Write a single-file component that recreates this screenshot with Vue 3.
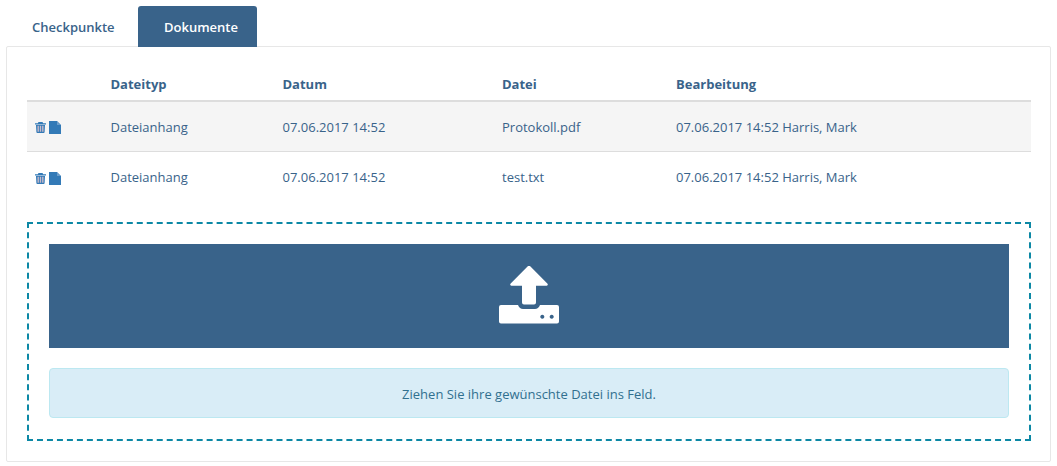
<template>
  <div class="page">
    <ul class="tabs">
      <li v-for="t in tabs" :key="t.name" class="tab" :class="{ active: t.active }">{{ t.name }}</li>
    </ul>
    <div class="panel">
      <table class="docs">
        <colgroup>
          <col class="c-icons" />
          <col class="c-type" />
          <col class="c-date" />
          <col class="c-file" />
          <col />
        </colgroup>
        <thead>
          <tr>
            <th></th>
            <th class="nudge">Dateityp</th>
            <th class="nudge">Datum</th>
            <th>Datei</th>
            <th>Bearbeitung</th>
          </tr>
        </thead>
        <tbody>
          <tr v-for="d in docs" :key="d.file">
            <td class="icons">
              <svg class="ico trash" width="11" height="11" viewBox="0 0 11 11">
                <path fill="#337ab7" d="M3.500 0h4l.7 1.200H11v1.300H0V1.200h2.800z" />
                <path fill="#337ab7" d="M1 3h9l-.4 7a1 1 0 0 1-1 1H2.400a1 1 0 0 1-1-1z" />
                <path fill="#c7b9c9" d="M2.500 3.800h1.400v6H2.500zM4.800 3.800h1.400v6H4.800zM7.100 3.800h1.400v6H7.100z" />
              </svg>
              <svg class="ico" width="12" height="13" viewBox="0 0 12 13">
                <path fill="#337ab7" d="M0 0h8l4 4v9H0z" />
                <path fill="#6f9fcb" d="M8 .5v3.500h3.500z" />
              </svg>
            </td>
            <td class="nudge">{{ d.type }}</td>
            <td class="nudge">{{ d.date }}</td>
            <td>{{ d.file }}</td>
            <td>{{ d.edited }}</td>
          </tr>
        </tbody>
      </table>
      <div class="drop">
        <div class="drop-bar">
          <svg width="60" height="60" viewBox="0 0 60 60">
            <path fill="#fff" d="M28.300.7a2.400 2.400 0 0 1 3.400 0L48.300 17.500a1.300 1.300 0 0 1-1 2.300H37V36.500a2 2 0 0 1-2 2H25a2 2 0 0 1-2-2V19.800H12.700a1.300 1.300 0 0 1-1-2.300z" />
            <path fill="#fff" fill-rule="evenodd" d="M2 39H19c1 2.800 2.800 4 5 4h12c2.200 0 4-1.200 5-4H58a2 2 0 0 1 2 2V55.500a2 2 0 0 1-2 2H2a2 2 0 0 1-2-2V41a2 2 0 0 1 2-2zM43.300 48.700a2 2 0 1 0 .01 0zM52.700 48.700a2 2 0 1 0 .01 0z" />
          </svg>
        </div>
        <div class="hint">Ziehen Sie ihre gewünschte Datei ins Feld.</div>
      </div>
    </div>
  </div>
</template>

<script setup>
const tabs = [
  { name: 'Checkpunkte', active: false },
  { name: 'Dokumente', active: true },
]

const docs = [
  { type: 'Dateianhang', date: '07.06.2017 14:52', file: 'Protokoll.pdf', edited: '07.06.2017 14:52 Harris, Mark' },
  { type: 'Dateianhang', date: '07.06.2017 14:52', file: 'test.txt', edited: '07.06.2017 14:52 Harris, Mark' },
]
</script>

<style>
html, body { background: #fff; }
</style>

<style scoped>
.page {
  width: 1057px;
  height: 466px;
  overflow: hidden;
  padding: 6px 6px 0;
  box-sizing: border-box;
  font-family: "Open Sans", "DejaVu Sans", sans-serif;
  font-size: 13px;
  color: #39638a;
}
.tabs {
  display: flex;
  list-style: none;
  margin: 0 0 -1px;
  padding: 0;
  position: relative;
}
.tab {
  width: 132px;
  height: 41px;
  box-sizing: border-box;
  padding-left: 26px;
  line-height: 43px;
  font-weight: 600;
}
.tab.active {
  width: 119px;
  background: #39638a;
  color: #fff;
  border-radius: 3px 3px 0 0;
}
.panel {
  width: 1045px;
  height: 416px;
  box-sizing: border-box;
  border: 1px solid #e7e7e7;
  border-radius: 2px;
  padding: 19px 20px 0;
  background: #fff;
}
.docs {
  width: 1004px;
  border-collapse: collapse;
  table-layout: fixed;
}
.c-icons { width: 76px; }
.c-type { width: 172px; }
.c-date { width: 219px; }
.c-file { width: 174px; }
th {
  height: 32px;
  padding: 2px 8px 0;
  text-align: left;
  font-weight: 700;
  border-bottom: 2px solid #ddd;
}
td {
  height: 50px;
  padding: 0 8px;
  border-top: 1px solid #ddd;
}
tbody tr:first-child td {
  border-top: 0;
  height: 49px;
}
tbody tr:nth-child(odd) { background: #f5f5f5; }
th.nudge, td.nudge { padding-left: 7.5px; }
td.icons {
  padding-left: 8px;
  font-size: 0;
}
.ico {
  vertical-align: middle;
  position: relative;
  top: 1px;
}
.trash {
  margin-right: 2.5px;
}
.drop {
  margin-top: 20px;
  width: 1004px;
  height: 219px;
  box-sizing: border-box;
  border: 2px dashed #0c88a5;
  padding: 20px;
}
.drop-bar {
  height: 104px;
  background: #39638a;
  display: flex;
  align-items: center;
  justify-content: center;
}
.hint {
  margin-top: 20px;
  height: 50px;
  box-sizing: border-box;
  border: 1px solid #bce8f1;
  border-radius: 4px;
  background: #d9edf7;
  color: #31708f;
  line-height: 50px;
  text-align: center;
}
</style>
